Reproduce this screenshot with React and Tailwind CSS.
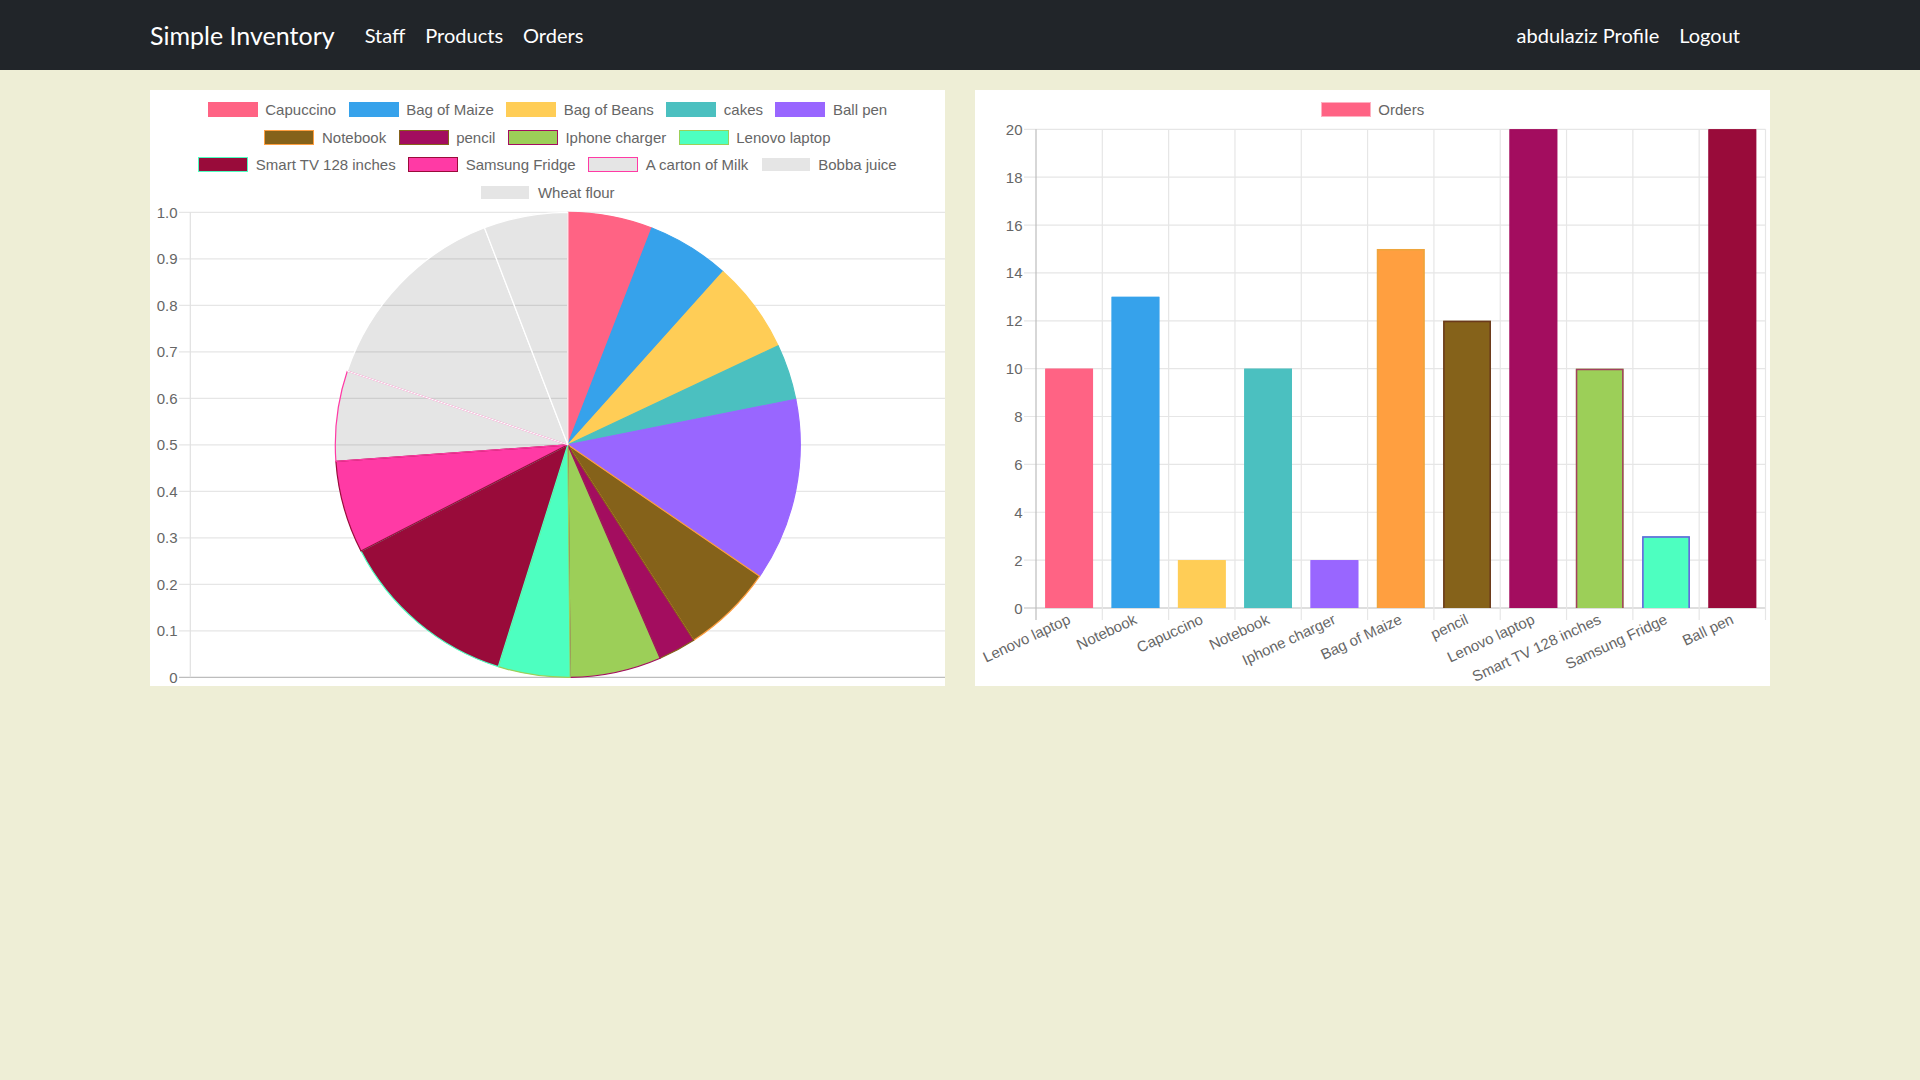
import React from "react";

const PIE_LABELS = [
  "Capuccino", "Bag of Maize", "Bag of Beans", "cakes", "Ball pen",
  "Notebook", "pencil", "Iphone charger", "Lenovo laptop",
  "Smart TV 128 inches", "Samsung Fridge", "A carton of Milk", "Bobba juice",
  "Wheat flour",
];
const GREY = "rgba(0,0,0,0.1)";
const PIE_BG = ["#ff6384", "#36a2eb", "#ffcd56", "#4bc0c0", "#9966ff", "#85621a", "#a30d5f", "#9ccf58", "#4dffc0", "#990b3a", "#ff3aa5", GREY, GREY, GREY];
const PIE_BORDER = ["#ff6384", "#36a2eb", "#ffcd56", "#4bc0c0", "#9966ff", "#ff9f40", "#85621a", "#a30d5f", "#9ccf58", "#4dffc0", "#990b3a", "#ff3aa5", "#ffffff", "#ffffff"];
const PIE_ANGLES = [0, 21.2, 41.9, 64.8, 78.7, 124.4, 147.2, 156.6, 179.4, 197.4, 242.8, 265.9, 288.5, 339, 360];
const PIE_ROWS = [[0, 1, 2, 3, 4], [5, 6, 7, 8], [9, 10, 11, 12], [13]];

const BAR_LABELS = ["Lenovo laptop", "Notebook", "Capuccino", "Notebook", "Iphone charger", "Bag of Maize", "pencil", "Lenovo laptop", "Smart TV 128 inches", "Samsung Fridge", "Ball pen"];
const BAR_VALUES = [10, 13, 2, 10, 2, 15, 12, 25, 10, 3, 25];
const BAR_BG = ["#ff6384", "#36a2eb", "#ffcd56", "#4bc0c0", "#9966ff", "#ff9f40", "#85621a", "#a30d5f", "#9ccf58", "#4dffc0", "#990b3a"];
const BAR_BORDER = ["#ff6384", "#36a2eb", "#ffcd56", "#4bc0c0", "#9966ff", "#eea53c", "#6b3a1c", "#a30d5f", "#a3405f", "#6a5ae0", "#990b3a"];

const CHART_FONT = { fontFamily: '"Liberation Sans", Arial, Helvetica, sans-serif' };

function LegendItem({ color, border, label }) {
  return (
    <div className="flex items-center gap-[7.5px]">
      <span className="block w-[50px] h-[15px] border-[1.5px] border-solid" style={{ backgroundColor: color, borderColor: border }} />
      <span className="text-[15px] leading-none text-[#666666] font-['Liberation_Sans',Arial,sans-serif]">{label}</span>
    </div>
  );
}

function pt(cx, cy, r, deg) {
  const a = (deg * Math.PI) / 180;
  return [cx + r * Math.sin(a), cy - r * Math.cos(a)];
}

function PieCard() {
  const cx = 417.8, cy = 238.8, r = 232.5;
  const yv = (v) => 471.3 - 465 * v;
  const ticks = [0, 0.1, 0.2, 0.3, 0.4, 0.5, 0.6, 0.7, 0.8, 0.9, 1.0];
  return (
    <div className="w-[795px] h-[596px] bg-white flex flex-col">
      <div className="h-[116px] pt-[6px] flex flex-col">
        {PIE_ROWS.map((row, ri) => (
          <div key={ri} className="h-[27.5px] flex items-center justify-center gap-x-[12.5px]">
            {row.map((i) => (
              <LegendItem key={i} color={PIE_BG[i]} border={PIE_BORDER[i]} label={PIE_LABELS[i]} />
            ))}
          </div>
        ))}
      </div>
      <svg width="795" height="480" className="block overflow-visible">
        {ticks.map((v, i) => (
          <line key={i} x1={29} x2={795} y1={yv(v)} y2={yv(v)} stroke={v === 0 ? "#bdbdbd" : "#e6e6e6"} strokeWidth="1.2" />
        ))}
        <line x1={40.3} x2={40.3} y1={yv(1)} y2={yv(0)} stroke="#e0e0e0" strokeWidth="1.2" />
        {ticks.map((v, i) => (
          <text key={i} x={27.5} y={yv(v)} textAnchor="end" dominantBaseline="central" fontSize="15" fill="#666" style={CHART_FONT}>
            {v === 0 ? "0" : v.toFixed(1)}
          </text>
        ))}
        {PIE_LABELS.map((_, i) => {
          const a0 = PIE_ANGLES[i], a1 = PIE_ANGLES[i + 1];
          const [x0, y0] = pt(cx, cy, r, a0);
          const [x1, y1] = pt(cx, cy, r, a1);
          const large = a1 - a0 > 180 ? 1 : 0;
          const d = `M ${cx} ${cy} L ${x0} ${y0} A ${r} ${r} 0 ${large} 1 ${x1} ${y1} Z`;
          return <path key={i} d={d} fill={PIE_BG[i]} stroke={PIE_BORDER[i]} strokeWidth="1.2" strokeLinejoin="round" />;
        })}
      </svg>
    </div>
  );
}

function BarCard() {
  const x0 = 61, x1 = 790.5;
  const cw = (x1 - x0) / 11;
  const yv = (v) => 484 - 23.935 * v;
  const ticks = [0, 2, 4, 6, 8, 10, 12, 14, 16, 18, 20];
  const bw = cw * 0.72;
  return (
    <div className="w-[795px] h-[596px] bg-white flex flex-col">
      <div className="h-[34px] pt-[6px] flex flex-col">
        <div className="h-[27.5px] flex items-center justify-center">
          <LegendItem color="#ff6384" border="#ffb1c1" label="Orders" />
        </div>
      </div>
      <svg width="795" height="562" className="block overflow-visible">
        {ticks.map((v, i) => (
          <line key={i} x1={49} x2={x1} y1={yv(v)} y2={yv(v)} stroke={v === 0 ? "#bdbdbd" : "#e6e6e6"} strokeWidth="1.2" />
        ))}
        {Array.from({ length: 12 }).map((_, i) => (
          <line key={i} x1={x0 + i * cw} x2={x0 + i * cw} y1={yv(20)} y2={yv(0) + 12} stroke={i === 0 ? "#bdbdbd" : "#e6e6e6"} strokeWidth="1.2" />
        ))}
        {ticks.map((v, i) => (
          <text key={i} x={47.5} y={yv(v)} textAnchor="end" dominantBaseline="central" fontSize="15" fill="#666" style={CHART_FONT}>
            {v}
          </text>
        ))}
        {BAR_VALUES.map((v, i) => {
          const c = x0 + cw * (i + 0.5);
          const top = yv(Math.min(v, 20));
          const h = yv(0) - top;
          return (
            <g key={i}>
              <rect x={c - bw / 2} y={top} width={bw} height={h} fill={BAR_BG[i]} />
              <path d={`M ${c - bw / 2 + 0.75} ${yv(0)} L ${c - bw / 2 + 0.75} ${top + 0.75} L ${c + bw / 2 - 0.75} ${top + 0.75} L ${c + bw / 2 - 0.75} ${yv(0)}`} fill="none" stroke={BAR_BORDER[i]} strokeWidth="1.5" />
            </g>
          );
        })}
        {BAR_LABELS.map((l, i) => {
          const c = x0 + cw * (i + 0.5);
          return (
            <text key={i} x={c} y={494} textAnchor="end" dominantBaseline="central" fontSize="15" fill="#666" style={CHART_FONT} transform={`rotate(-25 ${c} 494)`}>
              {l}
            </text>
          );
        })}
      </svg>
    </div>
  );
}

export default function App() {
  return (
    <div className="min-h-screen bg-[#eeeed6] font-['Lato','Noto_Sans',sans-serif]">
      <nav className="h-[70px] bg-[#212529]">
        <div className="w-[1620px] h-full mx-auto flex items-center justify-between">
          <div className="flex items-center">
            <a className="text-[25px] text-white mr-[20px] leading-none">Simple Inventory</a>
            <div className="flex items-center">
              <a className="px-[10px] text-[20px] text-white leading-none">Staff</a>
              <a className="px-[10px] text-[20px] text-white leading-none">Products</a>
              <a className="px-[10px] text-[20px] text-white leading-none">Orders</a>
            </div>
          </div>
          <div className="flex items-center mr-[20px]">
            <a className="px-[10px] text-[20px] text-white leading-none">abdulaziz Profile</a>
            <a className="px-[10px] text-[20px] text-white leading-none">Logout</a>
          </div>
        </div>
      </nav>
      <main className="w-[1620px] mx-auto mt-[20px] flex gap-[30px]">
        <PieCard />
        <BarCard />
      </main>
    </div>
  );
}
